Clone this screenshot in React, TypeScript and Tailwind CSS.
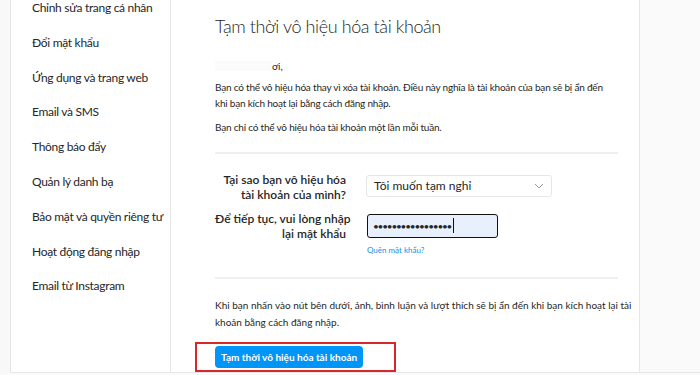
import React from "react";

const items = [
  "Chỉnh sửa trang cá nhân",
  "Đổi mật khẩu",
  "Ứng dụng và trang web",
  "Email và SMS",
  "Thông báo đẩy",
  "Quản lý danh bạ",
  "Bảo mật và quyền riêng tư",
  "Hoạt động đăng nhập",
  "Email từ Instagram",
];

export default function App() {
  return (
    <div
      className="flex h-[375px] w-[700px] overflow-hidden bg-[#fafafa] text-[#262626] whitespace-nowrap"
      style={{ fontFamily: 'Lato, "Noto Sans", sans-serif' }}
    >
      <div className="w-[11px] h-[373px] border-r border-[#e6e6e6] bg-[#f8f8f8]" />
      <div className="w-[160px] h-[373px] border-r border-[#e6e6e6] bg-white border-b">
        <ul className="flex flex-col pl-[21px] -mt-[1px]">
          {items.map((t) => (
            <li key={t} className="h-[34.8px] flex items-start text-[12px] tracking-[-0.3px] leading-[17px] text-[#262626]">
              {t}
            </li>
          ))}
        </ul>
      </div>
      <div className="w-[469px] h-[373px] border-r border-b border-[#e6e6e6] bg-white pl-[44px] pr-[21px] flex flex-col">
        <h1 className="mt-[14px] text-[18px] tracking-[-0.4px] font-light leading-[24px] text-[#262626]">
          Tạm thời vô hiệu hóa tài khoản
        </h1>
        <div className="mt-[21px] flex items-center text-[10px] leading-[14px] text-[#262626]">
          <span className="w-[57px] h-[10px] bg-[#fbfbfb]" />
          <span>ơi,</span>
        </div>
        <p className="mt-[6px] text-[10px] tracking-[-0.2px] leading-[16px] text-[#262626]">
          Bạn có thể vô hiệu hóa thay vì xóa tài khoản. Điều này nghĩa là tài khoản của bạn sẽ bị ẩn đến
          <br />
          khi bạn kích hoạt lại bằng cách đăng nhập.
        </p>
        <p className="mt-[8px] text-[10px] tracking-[-0.2px] leading-[16px] text-[#262626]">
          Bạn chỉ có thể vô hiệu hóa tài khoản một lần mỗi tuần.
        </p>
        <div className="mt-[17px] h-[2px] bg-[#efefef]" />
        <div className="mt-[21px] flex items-start">
          <div className="w-[131px] -mt-[3px] text-right text-[12px] leading-[15px] font-semibold text-[#262626]">
            Tại sao bạn vô hiệu hóa
            <br />
            tài khoản của mình?
          </div>
          <div className="ml-[20px] w-[186px] h-[22px] border border-[#e6e6e6] rounded-[3px] flex items-center justify-between px-[7px]">
            <span className="text-[12px] text-[#262626]">Tôi muốn tạm nghỉ</span>
            <svg width="10" height="6" viewBox="0 0 10 6" fill="none">
              <path d="M1 1l4 4 4-4" stroke="#9a9a9a" strokeWidth="1" />
            </svg>
          </div>
        </div>
        <div className="mt-[12px] flex items-start">
          <div className="w-[131px] -mt-[3px] text-right text-[12px] leading-[15px] font-semibold text-[#262626]">
            Để tiếp tục, vui lòng nhập
            <br />
            lại mật khẩu
          </div>
          <div className="ml-[21px] flex flex-col">
            <div className="w-[131px] h-[24px] border-[1.5px] border-[#111] rounded-[3px] bg-[#e8f0fe] flex items-center pl-[5px]">
              <span className="text-[10px] tracking-[-1.2px] text-[#262626] leading-none">•••••••••••••••••</span>
              <span className="w-[1px] h-[15px] bg-[#111] ml-[2px]" />
            </div>
            <a className="mt-[7px] text-[8px] text-[#1a8ee3] leading-[10px]">Quên mật khẩu?</a>
          </div>
        </div>
        <div className="mt-[22px] h-[2px] bg-[#efefef]" />
        <p className="mt-[18px] text-[10px] leading-[17px] text-[#262626]">
          Khi bạn nhấn vào nút bên dưới, ảnh, bình luận và lượt thích sẽ bị ẩn đến khi bạn kích hoạt lại tài
          <br />
          khoản bằng cách đăng nhập.
        </p>
        <div className="mt-[11px] -ml-[20px] w-[201px] h-[31px] border-2 border-[#d9262c] flex items-center pl-[18px]">
          <button className="h-[22px] px-[6px] rounded-[4px] bg-[#0095f6] text-white text-[10px] font-bold leading-none">
            Tạm thời vô hiệu hóa tài khoản
          </button>
        </div>
      </div>
      <div className="flex-1 h-[373px] border-b border-[#e6e6e6]" />
    </div>
  );
}
